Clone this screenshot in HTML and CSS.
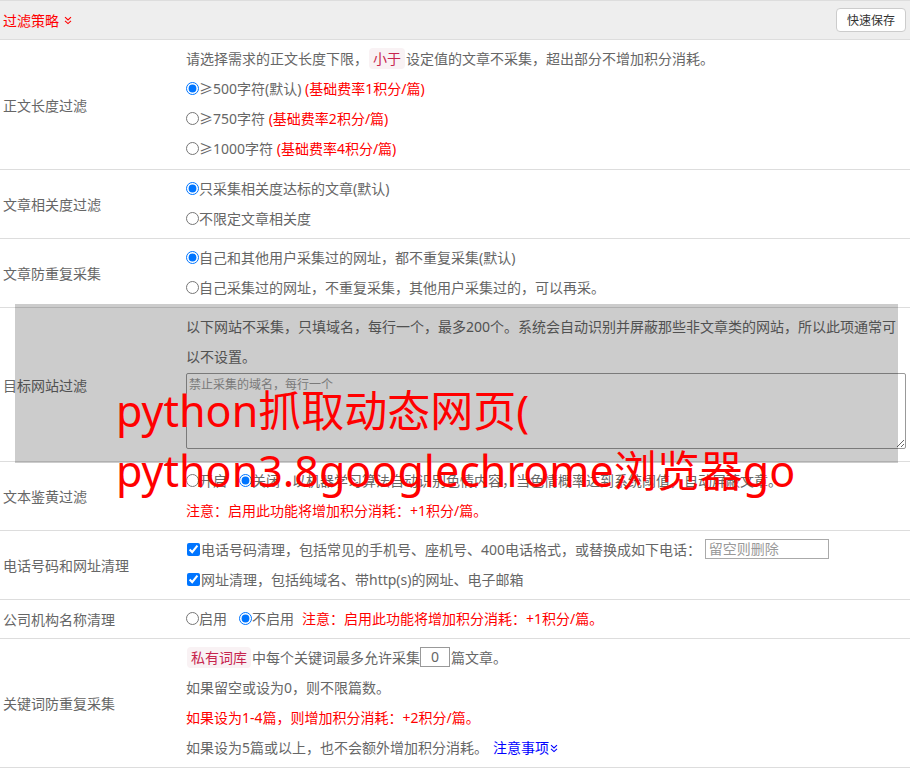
FILE: index.html
```html
<!DOCTYPE html>
<html lang="zh-CN">
<head>
<meta charset="utf-8">
<title>过滤策略</title>
<link rel="stylesheet" href="styles.css">
</head>
<body>
<div class="panel">
  <div class="head">
    <span class="head-title">过滤策略<svg class="chev" viewBox="0 0 8 9" width="8" height="9"><path d="M1 1.2 L4 4 L7 1.2 M1 4.8 L4 7.6 L7 4.8" fill="none" stroke="#f00" stroke-width="1.1"/></svg></span>
    <button class="btn" type="button">快速保存</button>
  </div>

  <div class="row">
    <div class="label">正文长度过滤</div>
    <div class="content content-first">
      <div class="line">请选择需求的正文长度下限，<code class="tag">小于</code>设定值的文章不采集，超出部分不增加积分消耗。</div>
      <div class="line"><label><input type="radio" name="len" checked>≥500字符(默认)</label> <span class="red">(基础费率1积分/篇)</span></div>
      <div class="line"><label><input type="radio" name="len">≥750字符</label> <span class="red">(基础费率2积分/篇)</span></div>
      <div class="line"><label><input type="radio" name="len">≥1000字符</label> <span class="red">(基础费率4积分/篇)</span></div>
    </div>
  </div>

  <div class="row">
    <div class="label">文章相关度过滤</div>
    <div class="content">
      <div class="line"><label><input type="radio" name="rel" checked>只采集相关度达标的文章(默认)</label></div>
      <div class="line"><label><input type="radio" name="rel">不限定文章相关度</label></div>
    </div>
  </div>

  <div class="row">
    <div class="label">文章防重复采集</div>
    <div class="content">
      <div class="line"><label><input type="radio" name="dup" checked>自己和其他用户采集过的网址，都不重复采集(默认)</label></div>
      <div class="line"><label><input type="radio" name="dup">自己采集过的网址，不重复采集，其他用户采集过的，可以再采。</label></div>
    </div>
  </div>

  <div class="row">
    <div class="label">目标网站过滤</div>
    <div class="content">
      <div class="para">以下网站不采集，只填域名，每行一个，最多200个。系统会自动识别并屏蔽那些非文章类的网站，所以此项通常可以不设置。</div>
      <textarea class="area" placeholder="禁止采集的域名，每行一个"></textarea>
    </div>
  </div>

  <div class="row">
    <div class="label">文本鉴黄过滤</div>
    <div class="content">
      <div class="line"><label class="opt"><input type="radio" name="porn">开启</label><label class="opt"><input type="radio" name="porn" checked>关闭</label>以机器学习算法自动识别色情内容，当色情概率达到系统阈值，自动屏蔽文章。</div>
      <div class="line red">注意：启用此功能将增加积分消耗：+1积分/篇。</div>
    </div>
  </div>

  <div class="row">
    <div class="label">电话号码和网址清理</div>
    <div class="content">
      <div class="line"><label><input type="checkbox" checked>电话号码清理，包括常见的手机号、座机号、400电话格式，或替换成如下电话：</label> <input class="phone" type="text" placeholder="留空则删除"></div>
      <div class="line"><label><input type="checkbox" checked>网址清理，包括纯域名、带http(s)的网址、电子邮箱</label></div>
    </div>
  </div>

  <div class="row">
    <div class="label">公司机构名称清理</div>
    <div class="content">
      <div class="line"><label class="opt"><input type="radio" name="org">启用</label><label class="opt opt-last"><input type="radio" name="org" checked>不启用</label><span class="red">注意：启用此功能将增加积分消耗：+1积分/篇。</span></div>
    </div>
  </div>

  <div class="row">
    <div class="label">关键词防重复采集</div>
    <div class="content">
      <div class="line"><code class="tag tag-kw">私有词库</code>中每个关键词最多允许采集<input class="num" type="text" value="0">篇文章。</div>
      <div class="line">如果留空或设为0，则不限篇数。</div>
      <div class="line red">如果设为1-4篇，则增加积分消耗：+2积分/篇。</div>
      <div class="line">如果设为5篇或以上，也不会额外增加积分消耗。<a class="link" href="#">注意事项<svg class="chev" viewBox="0 0 8 9" width="8" height="9"><path d="M1 1.2 L4 4 L7 1.2 M1 4.8 L4 7.6 L7 4.8" fill="none" stroke="#00f" stroke-width="1.1"/></svg></a></div>
    </div>
  </div>

  <div class="mask"></div>
  <div class="watermark"><div>python抓取动态网页(</div><div>python3.8googlechrome浏览器go</div></div>
</div>
</body>
</html>
```

FILE: styles.css
```css
html, body {
  margin: 0;
  padding: 0;
  background: #fff;
}

body {
  font-family: "Noto Sans", "Noto Sans CJK SC", sans-serif;
  font-size: 14px;
  color: #666;
}

.panel {
  position: relative;
  width: 910px;
}

.head {
  display: flex;
  align-items: center;
  justify-content: space-between;
  height: 38px;
  padding: 0 4px 0 3px;
  background: #eee;
  border-top: 1px solid #ddd;
  border-bottom: 1px solid #ddd;
}

.head-title {
  color: #f00;
  font-size: 14px;
  display: inline-flex;
  align-items: center;
}

.chev {
  margin-left: 5px;
  vertical-align: middle;
}

.btn {
  height: 24px;
  width: 70px;
  padding: 0;
  background: #fff;
  border: 1px solid #ccc;
  border-radius: 4px;
  font-family: "Noto Sans", "Noto Sans CJK SC", sans-serif;
  font-size: 12px;
  color: #333;
}

.row {
  display: flex;
  border-bottom: 1px solid #ddd;
}

.label {
  flex: none;
  width: 183px;
  padding-left: 3px;
  display: flex;
  align-items: center;
}

.content {
  flex: 1;
  min-width: 0;
  padding: 4px 4px 4px 0;
  line-height: 30px;
}

.content-first {
  padding-bottom: 5px;
}

.line {
  white-space: nowrap;
}

.para {
  line-height: 30px;
}

.red {
  color: #f00;
}

input[type="radio"],
input[type="checkbox"] {
  margin: 0;
  width: 13px;
  height: 13px;
  vertical-align: -1px;
}

input[type="checkbox"] {
  margin: 0 1px 0 1px;
}

.opt {
  margin-right: 12px;
}

.opt-last {
  margin-right: 8px;
}

.tag {
  font-family: inherit;
  font-size: 14px;
  color: #c7254e;
  background: #f9f2f4;
  border-radius: 4px;
  padding: 1px 4px;
  margin: 0 1px;
}

.tag-kw {
  margin-left: 1px;
}

.area {
  display: block;
  box-sizing: border-box;
  width: 100%;
  height: 76px;
  margin: 1px 0 8px;
  padding: 2px 2px;
  border: 1px solid #999;
  border-radius: 2px;
  font-family: "Noto Sans", "Noto Sans CJK SC", sans-serif;
  font-size: 12px;
  line-height: 18px;
  color: #666;
  resize: both;
}

.area::placeholder {
  color: #999;
}

.phone {
  box-sizing: border-box;
  width: 124px;
  height: 20px;
  padding: 0 3px;
  border: 1px solid #aaa;
  font-family: "Noto Sans", "Noto Sans CJK SC", sans-serif;
  font-size: 14px;
  color: #666;
  vertical-align: 1px;
}

.phone::placeholder {
  color: #999;
}

.num {
  box-sizing: border-box;
  width: 30px;
  height: 20px;
  padding: 0;
  margin: 0 1px 0 0;
  border: 1px solid #999;
  text-align: center;
  font-family: "Noto Sans", "Noto Sans CJK SC", sans-serif;
  font-size: 14px;
  color: #666;
  vertical-align: 1px;
}

.link {
  color: #00f;
  text-decoration: none;
  margin-left: 5px;
}

.link .chev {
  margin-left: 1px;
  vertical-align: 0;
}

.mask {
  position: absolute;
  left: 15px;
  top: 304px;
  width: 883px;
  height: 159px;
  background: rgba(0, 0, 0, 0.2);
}

.watermark {
  position: absolute;
  left: 116px;
  top: 381px;
  font-family: "Noto Sans", "Noto Sans CJK SC", sans-serif;
  font-size: 43px;
  line-height: 60px;
  color: #f00;
  white-space: nowrap;
}
```
